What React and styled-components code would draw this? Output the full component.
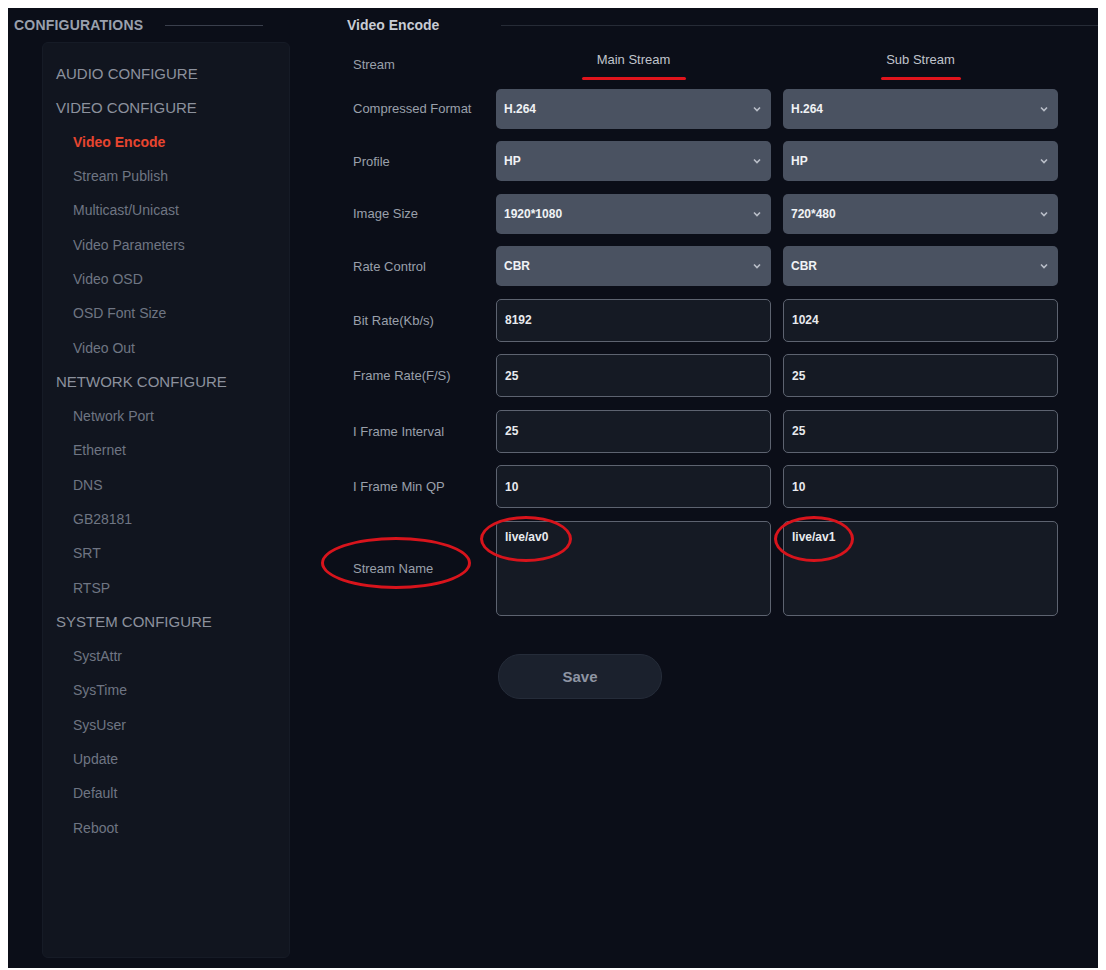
import React from "react";
import styled, { createGlobalStyle } from "styled-components";

const G = createGlobalStyle`
  html,body{margin:0;background:#fff;}
  body{padding:8px;font-family:"Liberation Sans",Arial,sans-serif;}
`;
const Page = styled.div`
  width:1090px;height:960px;background:#0b0e18;display:flex;box-sizing:border-box;position:relative;
  font-family:"Liberation Sans",Arial,sans-serif;
`;
const Side = styled.div`width:290px;display:flex;flex-direction:column;`;
const SideHead = styled.div`
  height:34px;display:flex;align-items:center;gap:22px;padding-left:6px;
  color:#9aa0ad;font-weight:bold;font-size:14px;letter-spacing:.2px;
  &::after{content:"";width:98px;height:1px;background:#3a3f4c;}
`;
const SidePanel = styled.div`
  margin:0 0 10px 34px;width:248px;flex:1;background:#11151f;border-radius:6px;border:1px solid #161b26;
  padding-top:13px;box-sizing:border-box;
`;
const Item = styled.div`
  height:34.3px;display:flex;align-items:center;
  padding-left:${p=>p.$sub?30:13}px;font-size:${p=>p.$sub?14:15}px;
  color:${p=>p.$active?"#e8452f":p.$sub?"#6f7583":"#8c919d"};
  font-weight:${p=>p.$active?"bold":"normal"};
`;
const Main = styled.div`flex:1;padding-left:49px;display:flex;flex-direction:column;`;
const MainHead = styled.div`
  height:34px;display:flex;align-items:center;gap:62px;color:#c8ccd4;font-weight:bold;font-size:14px;
  &::after{content:"";flex:1;height:1px;background:#262b36;}
`;
const Grid = styled.div`
  display:grid;grid-template-columns:131px 275px 275px;column-gap:12px;row-gap:12.5px;padding:10px 0 0 6px;align-items:center;
`;
const Label = styled.div`color:#9aa0ab;font-size:13px;`;
const Col = styled.div`color:#c0c4cc;font-size:13px;text-align:center;position:relative;height:24px;`;
const Select = styled.div`
  height:40px;background:#4a5261;border-radius:5px;display:flex;align-items:center;justify-content:space-between;
  padding:0 8px;color:#f0f2f5;font-size:12px;font-weight:bold;box-sizing:border-box;
`;
const Input = styled.div`
  height:43px;border:1px solid #5d6370;border-radius:5px;background:#151a24;display:flex;align-items:center;
  padding:0 8px;color:#e8eaee;font-size:12px;font-weight:bold;box-sizing:border-box;
  ${p=>p.$tall&&`height:95px;align-items:flex-start;padding-top:8px;`}
  position:relative;
`;
const Save = styled.div`
  margin:38px 0 0 151px;width:162px;height:43px;border-radius:22px;background:#1b212d;border:1px solid #252c39;
  display:flex;align-items:center;justify-content:center;color:#8e95a3;font-size:15px;font-weight:bold;
`;
const Underline = styled.span`position:absolute;left:50%;transform:translateX(-50%);bottom:-4px;width:${p=>p.$w}px;height:3px;background:#e0141c;border-radius:2px;`;
const Ring = styled.span`
  position:absolute;border:3px solid #d8141c;border-radius:50%;pointer-events:none;
  left:${p=>p.$x}px;top:${p=>p.$y}px;width:${p=>p.$w}px;height:${p=>p.$h}px;
`;
const Chev = () => (<svg width="12" height="12" viewBox="0 0 12 12"><path d="M3 4.5l3 3 3-3" stroke="#b9bec8" strokeWidth="1.6" fill="none"/></svg>);

const side = [
  ["AUDIO CONFIGURE"],["VIDEO CONFIGURE"],["Video Encode",1,1],["Stream Publish",1],["Multicast/Unicast",1],
  ["Video Parameters",1],["Video OSD",1],["OSD Font Size",1],["Video Out",1],["NETWORK CONFIGURE"],
  ["Network Port",1],["Ethernet",1],["DNS",1],["GB28181",1],["SRT",1],["RTSP",1],["SYSTEM CONFIGURE"],
  ["SystAttr",1],["SysTime",1],["SysUser",1],["Update",1],["Default",1],["Reboot",1],
];
const sels=[["Compressed Format","H.264","H.264"],["Profile","HP","HP"],["Image Size","1920*1080","720*480"],["Rate Control","CBR","CBR"]];
const ins=[["Bit Rate(Kb/s)","8192","1024"],["Frame Rate(F/S)","25","25"],["I Frame Interval","25","25"],["I Frame Min QP","10","10"]];

export default function App(){
  return (<><G/><Page>
    <Side><SideHead>CONFIGURATIONS</SideHead><SidePanel>
      {side.map(([t,s,a])=><Item key={t} $sub={s} $active={a}>{t}</Item>)}
    </SidePanel></Side>
    <Main>
      <MainHead>Video Encode</MainHead>
      <Grid>
        <Label>Stream</Label>
        <Col>Main Stream<Underline $w={104}/></Col>
        <Col>Sub Stream<Underline $w={80}/></Col>
        {sels.map(([l,a,b])=><React.Fragment key={l}><Label>{l}</Label><Select>{a}<Chev/></Select><Select>{b}<Chev/></Select></React.Fragment>)}
        {ins.map(([l,a,b])=><React.Fragment key={l}><Label>{l}</Label><Input>{a}</Input><Input>{b}</Input></React.Fragment>)}
        <Label style={{position:"relative"}}>Stream Name<Ring $x={-32} $y={-24} $w={144} $h={46}/></Label>
        <Input $tall>live/av0<Ring $x={-17} $y={-6} $w={86} $h={40}/></Input>
        <Input $tall>live/av1<Ring $x={-10} $y={-6} $w={74} $h={40}/></Input>
      </Grid>
      <Save>Save</Save>
    </Main>
  </Page></>);
}
